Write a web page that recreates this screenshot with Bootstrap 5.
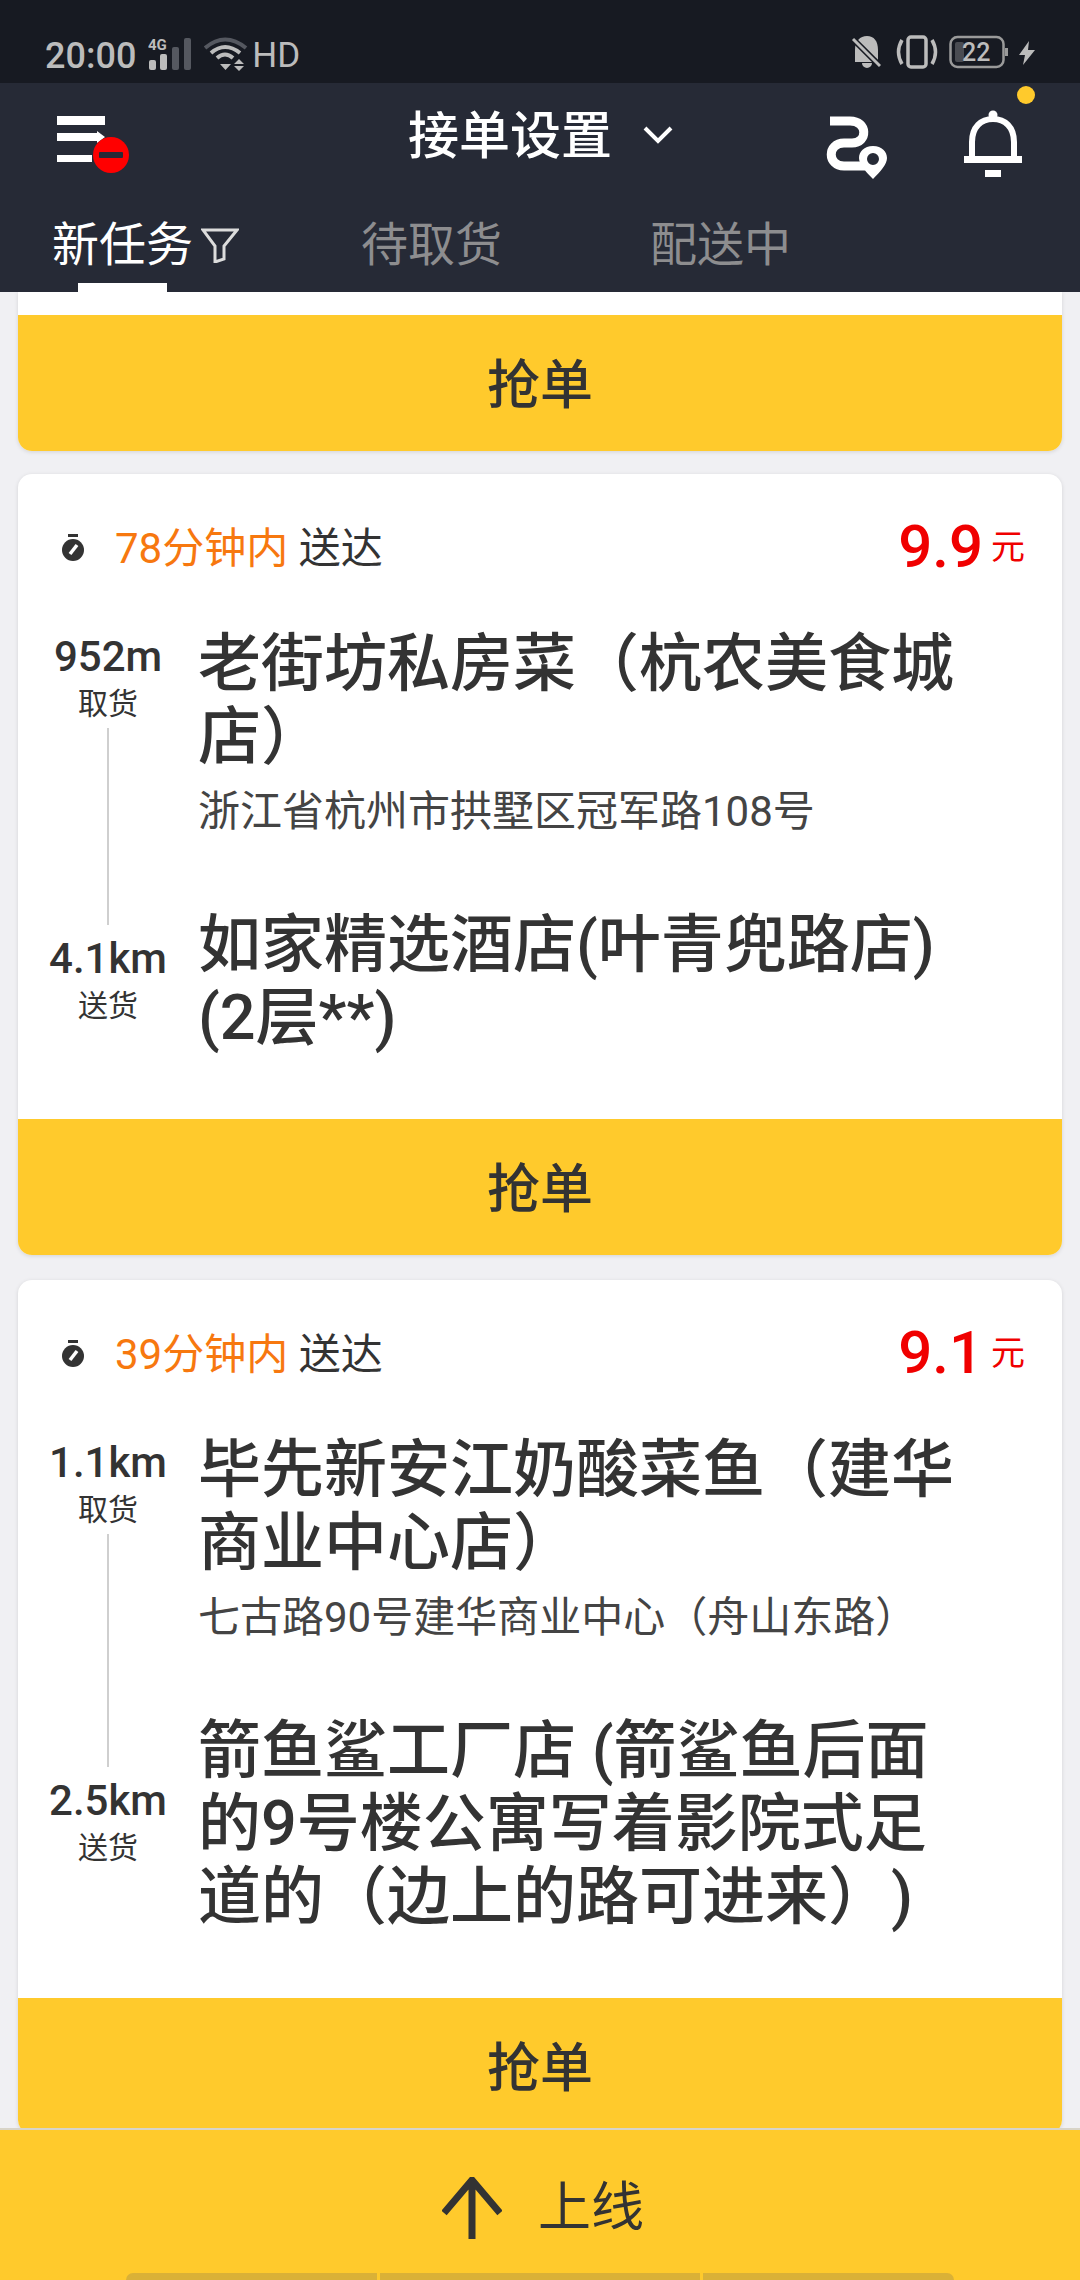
<!doctype html>
<html lang="zh-CN">
<head>
<meta charset="utf-8">
<title>新任务</title>
<link rel="stylesheet" href="https://cdn.jsdelivr.net/npm/bootstrap@5.3.0/dist/css/bootstrap.min.css">
<style>
html,body{margin:0;height:2280px;overflow:hidden}
body{font-family:Roboto,"Noto Sans CJK SC",sans-serif;background:#f0f0f3;color:#333}
.shell{height:2280px}
.stat{height:84px;background:#171a22;color:#bcbcbc;font-size:36px;padding:36px 44px 0 45px;line-height:40px;font-weight:500}
.stat svg{display:block}
.sig-ic{margin:1px 0 0 12px}
.wifi-ic{margin:1px 0 0 12px}
.hd-font{font-size:35px;margin-left:4px;font-weight:400}
.bel-ic{margin-top:-1px}
.vib-ic{margin:-1px 0 0 14px}
.bat-ic{margin:-1px 0 0 10px}
.bolt-ic{margin:5px 0 0 9px}
.top{height:209px;background:#262a36;color:#fff;position:relative}
.top-row{height:118px}
.menu-ic{position:absolute;left:57px;top:33px}
.ttl{position:absolute;left:408px;top:19px;font-size:51px;line-height:70px;font-weight:500}
.chev{position:absolute;left:643px;top:42px}
.route-ic{position:absolute;left:826px;top:33px}
.bell-ic{position:absolute;left:964px;top:27px}
.dot-y{position:absolute;left:1017px;top:3px;width:18px;height:18px;border-radius:50%;background:#ffca2c}
.tabs-row{height:91px;position:relative}
.tab-a,.tab-b,.tab-c{position:absolute;top:13px;font-size:47px;line-height:62px;color:#8d8d8f}
.tab-a{left:52px;color:#fff}
.tab-b{left:361px}
.tab-c{left:650px}
.fil{position:absolute;left:201px;top:26px}
.under{position:absolute;left:78px;bottom:0;width:89px;height:9px;background:#fff}
.feed{overflow:hidden;min-height:0}
.job{margin:0 18px 25px;border:0;border-radius:14px;box-shadow:0 1px 4px rgba(0,0,0,.12);overflow:hidden}
.job-part{border-radius:0 0 14px 14px;padding-top:23px;margin-bottom:23px}
.grab{display:block;width:100%;height:136px;border:0;border-radius:0;background:#ffca2c;color:#333;font-size:53px;line-height:60px;padding:6px 0 0;font-weight:500}
.grab:hover{background:#ffca2c;color:#333}
.meta-head{padding:51px 37px 0 43px;height:107px}
.tm{font-size:42px;line-height:48px;margin-left:30px}
.tm-o{color:#f7780f}
.price{color:#f00000;font-size:60px;font-weight:500;line-height:60px;margin-top:-8px}
.yuan{font-size:34px;font-weight:400;margin-left:8px}
.route-grid{padding:46px 102px 65px 0}
.lhs{width:180px;flex:none;text-align:center}
.dist{font-size:42px;line-height:48px;font-weight:500}
.dist-top{margin-top:6px}
.dist-low{margin-top:10px}
.act{font-size:30px;line-height:36px;margin-top:5px;margin-bottom:6px}
.act-low{margin-bottom:14px}
.vline{width:2px;background:#cfcfcf;flex:1 1 0;margin:0 auto;min-height:10px}
.spc{flex:1 1 0}
.name{font-size:63px;line-height:73px;margin:0;font-weight:500;text-spacing-trim:space-all}
.addr{font-size:42px;line-height:50px;color:#444;margin-top:14px;margin-bottom:71px}
.lift{height:152px;background:#ffca2c;border-top:2px solid #d8d4c8;position:relative;flex:none}
.lift-t{font-size:53px;line-height:60px;color:#333}
.lift-ic{margin-right:36px}
.lift-in{height:150px;padding:6px 0 0 6px}
.nav-g{position:absolute;left:126px;bottom:0;width:828px;height:7px;gap:3px}
.nav-g span{background:#dab137}
.nav-g span:first-child{flex:0 0 251px;border-top-left-radius:7px}
.nav-g span:nth-child(2){flex:0 0 320px}
.nav-g span:last-child{flex:1;border-top-right-radius:7px}
</style>
</head>
<body>
<div class="shell d-flex flex-column">
  <div class="stat d-flex align-items-start flex-none">
    <span>20:00</span>
    <svg class="sig-ic" width="44" height="34" viewBox="0 0 44 34"><text x="0" y="13" font-family="Roboto" font-size="15" font-weight="700" fill="#bcbcbc">4G</text><rect x="1" y="23" width="7" height="10" rx="2" fill="#bcbcbc"/><rect x="12" y="17" width="7" height="16" rx="2" fill="#bcbcbc"/><rect x="24" y="10" width="7" height="23" rx="2" fill="#555860"/><rect x="36" y="1" width="7" height="32" rx="2" fill="#555860"/></svg>
    <svg class="wifi-ic" width="44" height="34" viewBox="0 0 44 34"><path d="M1 11Q21-6 42 11" fill="none" stroke="#555860" stroke-width="4"/><path d="M7 16Q21 4 36 16" fill="none" stroke="#bcbcbc" stroke-width="4"/><path d="M13 21Q21 14 29 21" fill="none" stroke="#bcbcbc" stroke-width="4"/><path d="M16 27h11l-5.500 6zM35 22l5 5H30zM30 29h10l-5 5z" fill="#bcbcbc"/></svg>
    <span class="hd-font">HD</span>
    <svg class="ms-auto bel-ic" width="30" height="34" viewBox="0 0 30 34"><path d="M4 27V15C4 6 9 1 16 1s11 5 11 14v12zM11 28h10a5 5 0 0 1-10 0z" fill="#bcbcbc"/><path d="M2 4l27 27" stroke="#171a22" stroke-width="6"/><path d="M2 4l27 27" stroke="#bcbcbc" stroke-width="3"/></svg>
    <svg class="vib-ic" width="44" height="34" viewBox="0 0 44 34"><rect x="13" y="2" width="18" height="30" rx="3" fill="none" stroke="#bcbcbc" stroke-width="3.500"/><path d="M7 5Q0 17 7 29M37 5q7 12 0 24" fill="none" stroke="#bcbcbc" stroke-width="3.500"/></svg>
    <svg class="bat-ic" width="60" height="34" viewBox="0 0 60 34"><rect x="1.500" y="2" width="53" height="30" rx="7" fill="none" stroke="#9a9a9a" stroke-width="2.500"/><rect x="6" y="7" width="9" height="20" rx="2" fill="#4a4c52"/><rect x="56" y="13" width="3" height="8" fill="#9a9a9a"/><text x="13" y="26" font-family="Roboto" font-size="25" font-weight="500" fill="#bcbcbc">22</text></svg>
    <svg class="bolt-ic" width="18" height="24" viewBox="0 0 18 24"><path d="M11 0 1 14h6l-2 10 12-15h-7z" fill="#bcbcbc"/></svg>
  </div>
  <div class="top flex-none">
    <div class="top-row">
      <svg class="menu-ic" width="72" height="60" viewBox="0 0 72 60"><path d="M0 0h48v9H0zM0 17h40v-2l8 6-8 6v-2H0zM0 39h35v7H0z" fill="#fff"/><circle cx="54" cy="39" r="18" fill="#f00"/><rect x="42" y="36" width="24" height="6" rx="1" fill="#262a36"/></svg>
      <div class="ttl">接单设置</div>
      <svg class="chev" width="30" height="20" viewBox="0 0 30 20"><path d="M2 3l13 13L28 3" fill="none" stroke="#fff" stroke-width="4"/></svg>
      <svg class="route-ic" width="62" height="64" viewBox="0 0 62 64"><path d="M4 5h20c18 0 18 22 2 22H18C1 27 1 50 18 50h21" fill="none" stroke="#fff" stroke-width="9"/><path d="M47 30c9 0 14 6 14 12 0 6-6 13-14 21-8-8-14-15-14-21 0-6 5-12 14-12zm0 7a6 6 0 1 0 0 12 6 6 0 0 0 0-12z" fill="#fff" fill-rule="evenodd"/></svg>
      <svg class="bell-ic" width="58" height="68" viewBox="0 0 58 68"><circle cx="29" cy="5" r="4.500" fill="#fff"/><path d="M8 46V32C8 17 17 9 29 9s21 8 21 23v14" fill="none" stroke="#fff" stroke-width="6"/><path d="M0 46h58v7H0zM21 60h16v7H21z" fill="#fff"/></svg>
      <span class="dot-y"></span>
    </div>
    <div class="tabs-row">
      <span class="tab-a">新任务</span>
      <svg class="fil" width="38" height="36" viewBox="0 0 38 36"><path d="M2 3h34L23 19v13l-9 3V19z" fill="none" stroke="#dcdcdc" stroke-width="3"/></svg>
      <span class="tab-b">待取货</span>
      <span class="tab-c">配送中</span>
      <span class="under"></span>
    </div>
  </div>
  <div class="feed flex-grow-1">
    <div class="card job job-part">
      <button class="btn grab" type="button">抢单</button>
    </div>
    <div class="card job">
      <div class="meta-head d-flex justify-content-between align-items-start">
        <div class="d-flex align-items-center">
          <svg width="24" height="30" viewBox="0 0 24 30"><rect x="7" y="0" width="10" height="3" fill="#333"/><circle cx="12" cy="16" r="11" fill="#333"/><path d="M9 20l7-9" stroke="#fff" stroke-width="3.500"/></svg>
          <span class="tm"><span class="tm-o">78分钟内</span> 送达</span>
        </div>
        <div class="price d-flex align-items-center">9.9<span class="yuan">元</span></div>
      </div>
      <div class="route-grid">
        <div class="d-flex">
          <div class="lhs d-flex flex-column">
            <div class="dist dist-top">952m</div>
            <div class="act">取货</div>
            <div class="vline"></div>
          </div>
          <div class="flex-grow-1">
            <h2 class="name">老街坊私房菜（杭农美食城店）</h2>
            <div class="addr">浙江省杭州市拱墅区冠军路108号</div>
          </div>
        </div>
        <div class="d-flex">
          <div class="lhs d-flex flex-column">
            <div class="vline"></div>
            <div class="dist dist-low">4.1km</div>
            <div class="act act-low">送货</div>
            <div class="spc"></div>
          </div>
          <div class="flex-grow-1">
            <h2 class="name">如家精选酒店(叶青兜路店)<br>(2层**)</h2>
          </div>
        </div>
      </div>
      <button class="btn grab" type="button">抢单</button>
    </div>
    <div class="card job">
      <div class="meta-head d-flex justify-content-between align-items-start">
        <div class="d-flex align-items-center">
          <svg width="24" height="30" viewBox="0 0 24 30"><rect x="7" y="0" width="10" height="3" fill="#333"/><circle cx="12" cy="16" r="11" fill="#333"/><path d="M9 20l7-9" stroke="#fff" stroke-width="3.500"/></svg>
          <span class="tm"><span class="tm-o">39分钟内</span> 送达</span>
        </div>
        <div class="price d-flex align-items-center">9.1<span class="yuan">元</span></div>
      </div>
      <div class="route-grid">
        <div class="d-flex">
          <div class="lhs d-flex flex-column">
            <div class="dist dist-top">1.1km</div>
            <div class="act">取货</div>
            <div class="vline"></div>
          </div>
          <div class="flex-grow-1">
            <h2 class="name">毕先新安江奶酸菜鱼（建华商业中心店）</h2>
            <div class="addr">七古路90号建华商业中心（舟山东路）</div>
          </div>
        </div>
        <div class="d-flex">
          <div class="lhs d-flex flex-column">
            <div class="vline"></div>
            <div class="dist dist-low">2.5km</div>
            <div class="act act-low">送货</div>
            <div class="spc"></div>
          </div>
          <div class="flex-grow-1">
            <h2 class="name">箭鱼鲨工厂店 (箭鲨鱼后面的9号楼公寓写着影院式足道的（边上的路可进来）)</h2>
          </div>
        </div>
      </div>
      <button class="btn grab" type="button">抢单</button>
    </div>
  </div>
  <div class="lift">
    <div class="lift-in d-flex align-items-center justify-content-center">
      <svg class="lift-ic" width="60" height="62" viewBox="0 0 60 62"><path d="M30 62V3M2 36 30 3l28 33" fill="none" stroke="#333" stroke-width="7"/></svg>
      <span class="lift-t">上线</span>
    </div>
    <div class="nav-g d-flex"><span></span><span></span><span></span></div>
  </div>
</div>
<script src="https://cdn.jsdelivr.net/npm/bootstrap@5.3.0/dist/js/bootstrap.bundle.min.js"></script>
</body>
</html>
